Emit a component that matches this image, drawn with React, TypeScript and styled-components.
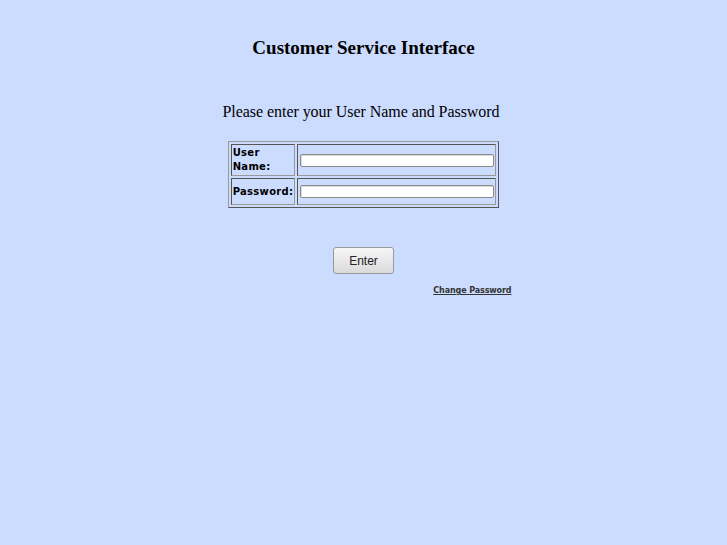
import React from "react";
import styled, { createGlobalStyle } from "styled-components";

const GlobalStyle = createGlobalStyle`
  html, body {
    margin: 0;
    background: #ccdcff;
  }
  body {
    font-family: "Liberation Serif", "Times New Roman", serif;
    color: #000;
  }
`;

const Page = styled.div`
  display: flex;
  flex-direction: column;
  align-items: center;
  min-height: 545px;
  padding-top: 37px;
  box-sizing: border-box;
`;

const Title = styled.h1`
  margin: 0;
  font-size: 19px;
  font-weight: bold;
  line-height: 22px;
`;

const Prompt = styled.p`
  margin: 43px 0 0;
  padding-right: 5px;
  font-size: 16px;
  line-height: 19px;
  letter-spacing: -0.05px;
`;

const LoginTable = styled.table`
  margin-top: 20px;
  border: 1px solid;
  border-color: #999 #555 #555 #999;
  border-spacing: 2px;
`;

const Cell = styled.td`
  border: 1px solid;
  border-color: #555 #999 #999 #555;
  padding: 1px 1px 1px 2px;
  vertical-align: middle;
`;

const Label = styled(Cell)`
  width: 1px;
  padding: 1px;
  font-family: "DejaVu Sans", sans-serif;
  font-size: 10px;
  letter-spacing: 0.3px;
  font-weight: bold;
  line-height: 14px;
`;

const TextBox = styled.input`
  display: block;
  width: 194px;
  height: 13px;
  box-sizing: border-box;
  margin: 5px 0;
  border: 1px solid #8a8a8a;
  border-radius: 2px;
  background: #fff;
  box-shadow: inset 1px 1px 0 #ddd;
  font-size: 10px;
  padding: 0 2px;
  outline: none;
`;

const Button = styled.button`
  margin-top: 39px;
  width: 61px;
  height: 27px;
  border: 1px solid #9a9a9a;
  border-radius: 3px;
  background: linear-gradient(#f6f6f6, #dadada);
  font-family: "Liberation Sans", Arial, sans-serif;
  font-size: 12px;
  color: #222;
  padding: 0;
`;

const LinkRow = styled.div`
  width: 296px;
  display: flex;
  justify-content: flex-end;
  margin-top: 12px;
`;

const SmallLink = styled.a`
  font-family: "DejaVu Sans", sans-serif;
  font-size: 8px;
  font-weight: bold;
  letter-spacing: -0.1px;
  color: #333;
  text-decoration: underline;
`;

export default function App() {
  return (
    <>
      <GlobalStyle />
      <Page>
        <Title>Customer Service Interface</Title>
        <Prompt>Please enter your User Name and Password</Prompt>
        <LoginTable>
          <tbody>
            <tr>
              <Label>User Name:</Label>
              <Cell>
                <TextBox type="text" />
              </Cell>
            </tr>
            <tr>
              <Label>Password:</Label>
              <Cell>
                <TextBox type="password" />
              </Cell>
            </tr>
          </tbody>
        </LoginTable>
        <Button>Enter</Button>
        <LinkRow>
          <SmallLink href="#">Change Password</SmallLink>
        </LinkRow>
      </Page>
    </>
  );
}
